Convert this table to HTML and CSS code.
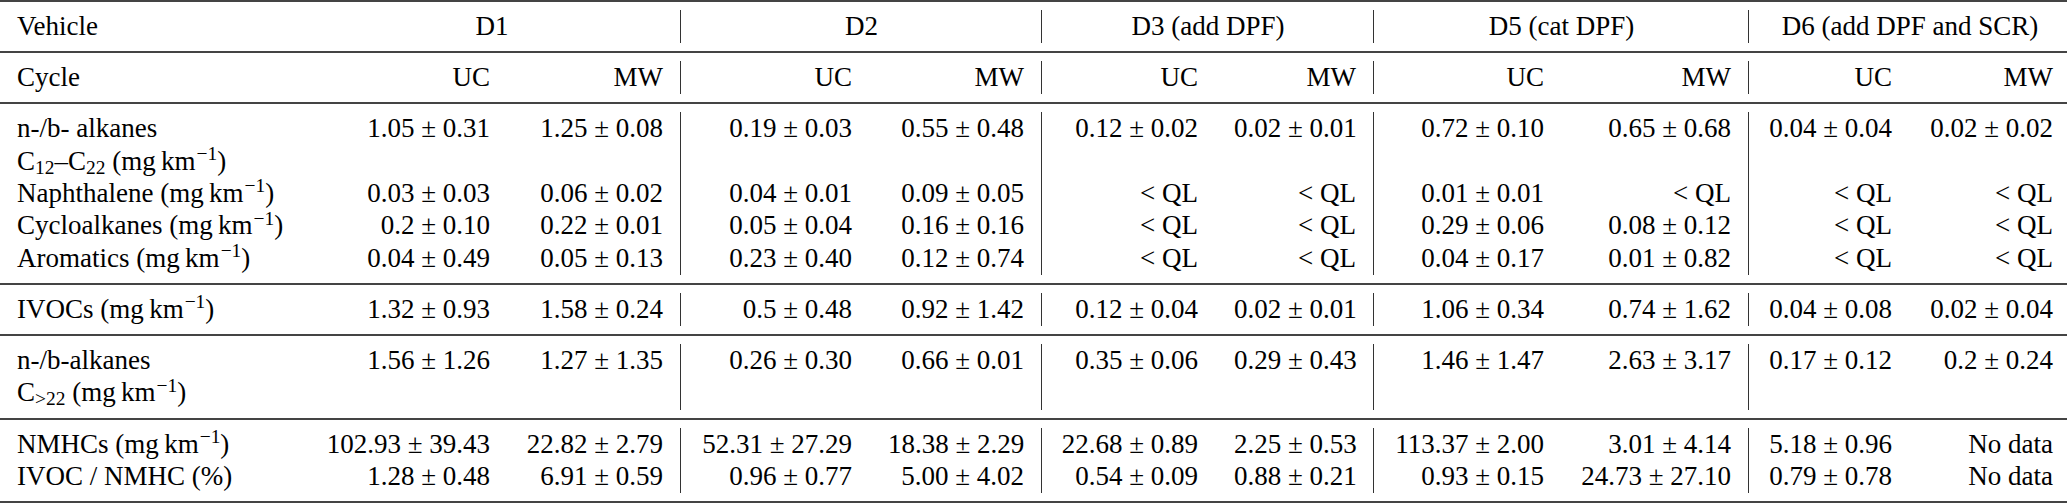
FILE: index.html
```html
<!DOCTYPE html>
<html lang="en">
<head>
<meta charset="utf-8">
<title>IVOC emissions table</title>
<link rel="stylesheet" href="styles.css">
</head>
<body>
<table class="data">
  <colgroup>
    <col class="c-label">
    <col class="c-d1uc"><col class="c-d1mw">
    <col class="c-d2uc"><col class="c-d2mw">
    <col class="c-d3uc"><col class="c-d3mw">
    <col class="c-d5uc"><col class="c-d5mw">
    <col class="c-d6uc"><col class="c-d6mw">
  </colgroup>
  <thead>
    <tr class="hrow">
      <th class="label">Vehicle</th>
      <th class="grp sep" colspan="2">D1</th>
      <th class="grp sep" colspan="2">D2</th>
      <th class="grp sep" colspan="2">D3 (add DPF)</th>
      <th class="grp sep" colspan="2">D5 (cat DPF)</th>
      <th class="grp last" colspan="2">D6 (add DPF and SCR)</th>
    </tr>
    <tr class="hrow">
      <th class="label">Cycle</th>
      <th class="num">UC</th><th class="num sep">MW</th>
      <th class="num">UC</th><th class="num sep">MW</th>
      <th class="num">UC</th><th class="num sep">MW</th>
      <th class="num">UC</th><th class="num sep">MW</th>
      <th class="num">UC</th><th class="num last">MW</th>
    </tr>
  </thead>
  <tbody class="blk">
    <tr>
      <td class="label">n-/b- alkanes<br>C<sub>12</sub>–C<sub>22</sub> (mg&#8201;km<sup>−1</sup>)</td>
      <td class="num">1.05 ± 0.31</td><td class="num sep">1.25 ± 0.08</td>
      <td class="num">0.19 ± 0.03</td><td class="num sep">0.55 ± 0.48</td>
      <td class="num">0.12 ± 0.02</td><td class="num sep">0.02 ± 0.01</td>
      <td class="num">0.72 ± 0.10</td><td class="num sep">0.65 ± 0.68</td>
      <td class="num">0.04 ± 0.04</td><td class="num last">0.02 ± 0.02</td>
    </tr>
    <tr>
      <td class="label">Naphthalene (mg&#8201;km<sup>−1</sup>)</td>
      <td class="num">0.03 ± 0.03</td><td class="num sep">0.06 ± 0.02</td>
      <td class="num">0.04 ± 0.01</td><td class="num sep">0.09 ± 0.05</td>
      <td class="num">&lt; QL</td><td class="num sep">&lt; QL</td>
      <td class="num">0.01 ± 0.01</td><td class="num sep">&lt; QL</td>
      <td class="num">&lt; QL</td><td class="num last">&lt; QL</td>
    </tr>
    <tr>
      <td class="label">Cycloalkanes (mg&#8201;km<sup>−1</sup>)</td>
      <td class="num">0.2 ± 0.10</td><td class="num sep">0.22 ± 0.01</td>
      <td class="num">0.05 ± 0.04</td><td class="num sep">0.16 ± 0.16</td>
      <td class="num">&lt; QL</td><td class="num sep">&lt; QL</td>
      <td class="num">0.29 ± 0.06</td><td class="num sep">0.08 ± 0.12</td>
      <td class="num">&lt; QL</td><td class="num last">&lt; QL</td>
    </tr>
    <tr>
      <td class="label">Aromatics (mg&#8201;km<sup>−1</sup>)</td>
      <td class="num">0.04 ± 0.49</td><td class="num sep">0.05 ± 0.13</td>
      <td class="num">0.23 ± 0.40</td><td class="num sep">0.12 ± 0.74</td>
      <td class="num">&lt; QL</td><td class="num sep">&lt; QL</td>
      <td class="num">0.04 ± 0.17</td><td class="num sep">0.01 ± 0.82</td>
      <td class="num">&lt; QL</td><td class="num last">&lt; QL</td>
    </tr>
  </tbody>
  <tbody class="blk">
    <tr>
      <td class="label">IVOCs (mg&#8201;km<sup>−1</sup>)</td>
      <td class="num">1.32 ± 0.93</td><td class="num sep">1.58 ± 0.24</td>
      <td class="num">0.5 ± 0.48</td><td class="num sep">0.92 ± 1.42</td>
      <td class="num">0.12 ± 0.04</td><td class="num sep">0.02 ± 0.01</td>
      <td class="num">1.06 ± 0.34</td><td class="num sep">0.74 ± 1.62</td>
      <td class="num">0.04 ± 0.08</td><td class="num last">0.02 ± 0.04</td>
    </tr>
  </tbody>
  <tbody class="blk">
    <tr>
      <td class="label">n-/b-alkanes<br>C<sub>&gt;22</sub> (mg&#8201;km<sup>−1</sup>)</td>
      <td class="num">1.56 ± 1.26</td><td class="num sep">1.27 ± 1.35</td>
      <td class="num">0.26 ± 0.30</td><td class="num sep">0.66 ± 0.01</td>
      <td class="num">0.35 ± 0.06</td><td class="num sep">0.29 ± 0.43</td>
      <td class="num">1.46 ± 1.47</td><td class="num sep">2.63 ± 3.17</td>
      <td class="num">0.17 ± 0.12</td><td class="num last">0.2 ± 0.24</td>
    </tr>
  </tbody>
  <tbody class="blk">
    <tr>
      <td class="label">NMHCs (mg&#8201;km<sup>−1</sup>)</td>
      <td class="num">102.93 ± 39.43</td><td class="num sep">22.82 ± 2.79</td>
      <td class="num">52.31 ± 27.29</td><td class="num sep">18.38 ± 2.29</td>
      <td class="num">22.68 ± 0.89</td><td class="num sep">2.25 ± 0.53</td>
      <td class="num">113.37 ± 2.00</td><td class="num sep">3.01 ± 4.14</td>
      <td class="num">5.18 ± 0.96</td><td class="num last">No data</td>
    </tr>
    <tr>
      <td class="label">IVOC / NMHC (%)</td>
      <td class="num">1.28 ± 0.48</td><td class="num sep">6.91 ± 0.59</td>
      <td class="num">0.96 ± 0.77</td><td class="num sep">5.00 ± 4.02</td>
      <td class="num">0.54 ± 0.09</td><td class="num sep">0.88 ± 0.21</td>
      <td class="num">0.93 ± 0.15</td><td class="num sep">24.73 ± 27.10</td>
      <td class="num">0.79 ± 0.78</td><td class="num last">No data</td>
    </tr>
  </tbody>
</table>
</body>
</html>
```

FILE: styles.css
```css
html, body {
  margin: 0;
  padding: 0;
  background: #ffffff;
}

.data {
  width: 2067px;
  table-layout: fixed;
  border-collapse: collapse;
  font-family: "Liberation Serif", "Times New Roman", serif;
  font-size: 27px;
  line-height: 32.4px;
  color: #000;
  border-top: 2px solid #444;
}

.c-label { width: 303px; }
.c-d1uc { width: 205px; }
.c-d1mw { width: 173px; }
.c-d2uc { width: 189px; }
.c-d2mw { width: 172px; }
.c-d3uc { width: 174px; }
.c-d3mw { width: 158px; }
.c-d5uc { width: 188px; }
.c-d5mw { width: 187px; }
.c-d6uc { width: 161px; }
.c-d6mw { width: 157px; }

.data th,
.data td {
  font-weight: normal;
  padding: 0 18px;
  vertical-align: top;
  white-space: nowrap;
  position: relative;
}

.data th {
  padding-top: 8px;
  padding-bottom: 8.7px;
}

.blk tr:first-child td {
  padding-top: 8px;
}

.blk tr:last-child td {
  padding-bottom: 8.7px;
}

.hrow {
  border-bottom: 2px solid #444;
}

.blk {
  border-bottom: 2px solid #444;
}

.data .label {
  text-align: left;
  padding-left: 17px;
}

.data .num {
  text-align: right;
}

.data .grp {
  text-align: center;
}

.data .last {
  padding-right: 14px;
}

.data .sep::after {
  content: "";
  position: absolute;
  right: 0;
  top: 0;
  bottom: 0;
  width: 1.5px;
  background: #333;
}

.hrow .sep::after {
  top: 8px;
  bottom: 8px;
}

.blk tr:first-child .sep::after {
  top: 8px;
}

.blk tr:last-child .sep::after {
  bottom: 8px;
}

sub {
  font-size: 0.72em;
  line-height: 0;
  vertical-align: -0.22em;
}

sup {
  font-size: 0.72em;
  line-height: 0;
  vertical-align: 0.5em;
  margin-left: 1px;
}
```
